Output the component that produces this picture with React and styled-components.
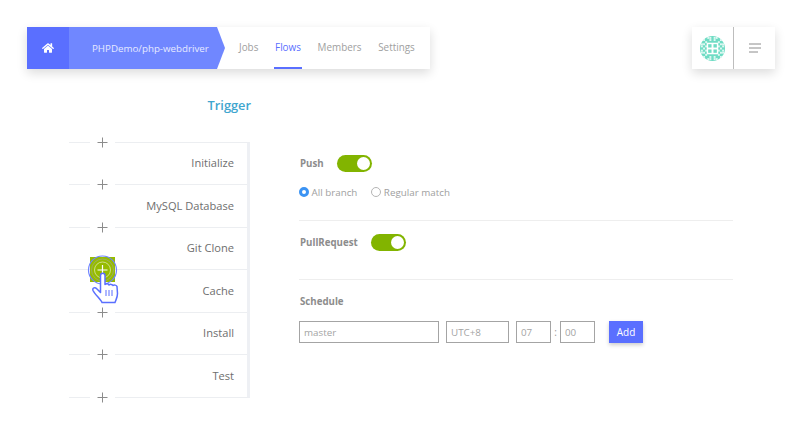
import React from "react";
import styled, { createGlobalStyle } from "styled-components";
import { FaHome } from "react-icons/fa";

const GlobalStyle = createGlobalStyle`
  html, body {
    margin: 0;
    padding: 0;
    background: #fff;
    font-family: "Open Sans", "Noto Sans", sans-serif;
  }
`;

const Page = styled.div`
  width: 800px;
  height: 448px;
  overflow: hidden;
  padding: 27px 25px 0 27px;
  box-sizing: border-box;
`;

const TopBar = styled.header`
  display: flex;
  justify-content: space-between;
  height: 42px;
`;

const NavCard = styled.nav`
  display: flex;
  width: 403px;
  background: #fff;
  box-shadow: 0 4px 10px rgba(0, 0, 0, 0.14);
`;

const HomeButton = styled.div`
  width: 42px;
  flex-shrink: 0;
  display: flex;
  align-items: center;
  justify-content: center;
  background: #5a6fff;
  color: #fff;
  font-size: 12px;
`;

const Repo = styled.div`
  width: 156px;
  flex-shrink: 0;
  box-sizing: border-box;
  padding-left: 23px;
  display: flex;
  align-items: center;
  background: #7087ff;
  color: #e6eaff;
  font-size: 9.75px;
  clip-path: polygon(0 0, 148px 0, 156px 50%, 148px 100%, 0 100%);
`;

const Tabs = styled.div`
  display: flex;
  margin-left: 13px;
  gap: 14.7px;
`;

const Tab = styled.div`
  height: 100%;
  box-sizing: border-box;
  padding: 0 1px;
  display: flex;
  align-items: center;
  font-size: 9.9px;
  color: ${(p) => (p.$active ? "#5a6fff" : "#a0a0a0")};
  border-bottom: 2px solid ${(p) => (p.$active ? "#5a6fff" : "transparent")};
`;

const UserCard = styled.div`
  display: flex;
  width: 83px;
  background: #fff;
  box-shadow: 0 4px 10px rgba(0, 0, 0, 0.14);
`;

const AvatarCell = styled.div`
  width: 42px;
  box-sizing: border-box;
  display: flex;
  align-items: center;
  justify-content: center;
  border-right: 1px solid #bdbdbd;
`;

const MenuCell = styled.div`
  flex: 1;
  display: flex;
  align-items: center;
  justify-content: center;
`;

const Content = styled.main`
  display: flex;
  margin-left: 42px;
`;

const StepColumn = styled.section`
  width: 182px;
  display: flex;
  flex-direction: column;
`;

const TriggerTitle = styled.div`
  height: 72.5px;
  padding-top: 27px;
  box-sizing: border-box;
  text-align: right;
  color: #3fa6cf;
  font-size: 12.8px;
  font-weight: 600;
  line-height: 18px;
`;

const StepList = styled.div`
  width: 181px;
  box-sizing: border-box;
  border-right: 3px solid #eef0f4;
  border-top: 1px solid #eceef1;
  border-bottom: 1px solid #eceef1;
  position: relative;
`;

const Step = styled.div`
  height: ${(p) => (p.$last ? "42px" : "42.5px")};
  box-sizing: border-box;
  display: flex;
  align-items: center;
  justify-content: flex-end;
  padding: 0 13px 1px 0;
  color: #6e6e6e;
  font-size: 11.1px;
  border-bottom: ${(p) => (p.$last ? "none" : "1px solid #eceef1")};
`;

const AddSlot = styled.div`
  position: absolute;
  left: 21px;
  top: ${(p) => p.$top}px;
  width: 25px;
  height: 13px;
  background: #fff;
  display: flex;
  align-items: center;
  justify-content: center;
`;

const ActiveSquare = styled.div`
  position: absolute;
  left: 21px;
  top: 114.5px;
  width: 25px;
  height: 25px;
  background: #96bb00;
`;

const HandOverlay = styled.div`
  position: absolute;
  left: 17px;
  top: 111.5px;
  line-height: 0;
`;

const SettingsPanel = styled.section`
  width: 434px;
  margin-left: 48px;
  padding-top: 85.5px;
`;

const Row = styled.div`
  display: flex;
  align-items: center;
  gap: 13px;
  height: 18px;
`;

const Label = styled.div`
  font-size: 9.7px;
  font-weight: 700;
  color: #8c8c8c;
  padding-left: 1px;
`;

const Toggle = styled.div`
  width: 35px;
  height: 17px;
  border-radius: 9px;
  background: #82b400;
  position: relative;
  &::after {
    content: "";
    position: absolute;
    right: 2px;
    top: 2px;
    width: 13px;
    height: 13px;
    border-radius: 50%;
    background: #fff;
  }
`;

const RadioRow = styled.div`
  display: flex;
  align-items: center;
  gap: 14px;
  margin-top: 12.5px;
  height: 14px;
`;

const RadioItem = styled.div`
  display: flex;
  align-items: center;
  gap: 2.5px;
  font-size: 9.8px;
  color: #a0a0a0;
`;

const RadioDot = styled.span`
  width: 10px;
  height: 10px;
  border-radius: 50%;
  box-sizing: border-box;
  border: ${(p) => (p.$on ? "3.5px solid #3b93f3" : "1px solid #b5b5b5")};
  background: #fff;
`;

const Divider = styled.div`
  height: 1px;
  background: #eeeeee;
  margin: ${(p) => p.$margin};
`;

const FieldRow = styled.div`
  display: flex;
  align-items: center;
  margin-top: 11px;
`;

const Field = styled.div`
  width: ${(p) => p.$w}px;
  height: 22px;
  box-sizing: border-box;
  border: 1px solid #a4a4a4;
  margin-right: ${(p) => p.$mr || 0}px;
  padding-left: 4px;
  display: flex;
  align-items: center;
  font-size: 9.8px;
  color: #a4a4a4;
`;

const Colon = styled.span`
  width: 9px;
  text-align: center;
  font-size: 10px;
  color: #999;
`;

const AddButton = styled.button`
  width: 34px;
  height: 22px;
  padding: 0;
  border: none;
  background: #5a6fff;
  color: #fff;
  font-family: inherit;
  font-size: 10px;
  box-shadow: 0 2px 4px rgba(0, 0, 0, 0.2);
`;

const steps = ["Initialize", "MySQL Database", "Git Clone", "Cache", "Install", "Test"];

const Plus = () => (
  <svg width="11" height="11" viewBox="0 0 11 11">
    <path d="M5.5 0.5v10M0.5 5.5h10" stroke="#8c8c8c" strokeWidth="1" />
  </svg>
);

const avatarCells = [
  [3, 0], [4, 0], [6, 0], [7, 0], [1, 1], [2, 2], [4, 1], [6, 1], [8, 2], [9, 1],
  [0, 3], [1, 3], [9, 3], [10, 3], [0, 4], [2, 4], [8, 4], [10, 4], [1, 5], [9, 5],
  [0, 6], [2, 6], [8, 6], [10, 6], [0, 7], [1, 7], [9, 7], [10, 7], [1, 9], [2, 8], [4, 9],
  [6, 9], [8, 8], [9, 9], [3, 10], [4, 10], [6, 10], [7, 10],
];

const Avatar = () => (
  <svg width="25" height="25" viewBox="0 0 26 26">
    <defs>
      <clipPath id="avatar-clip">
        <circle cx="13" cy="13" r="13" />
      </clipPath>
    </defs>
    <g clipPath="url(#avatar-clip)">
      <rect width="26" height="26" fill="#6fdcc4" />
      {avatarCells.map(([x, y]) => (
        <rect key={`${x}-${y}`} x={x * 2.2 + 1} y={y * 2.2 + 1} width="2" height="2" fill="#dff8f2" />
      ))}
      <rect x="7" y="7" width="12" height="12" fill="#fff" />
      {[8.5, 14].map((x) =>
        [8.5, 14].map((y) => (
          <rect key={`${x}-${y}`} x={x} y={y} width="3.5" height="3.5" fill="#6fdcc4" />
        ))
      )}
    </g>
  </svg>
);

const Hand = () => (
  <svg width="36" height="54" viewBox="0 0 36 54" fill="none">
    <circle cx="16.500" cy="16" r="14" stroke="#6f84ff" strokeWidth="1.200" />
    <circle cx="16.500" cy="16" r="11" stroke="#9aa87c" strokeWidth="0.8" />
    <circle cx="16.500" cy="16" r="8" stroke="#dbe9a8" strokeWidth="0.8" />
    <path d="M16.500 11v10M11.500 16h10" stroke="#fff" strokeWidth="1.200" />
    <path
      d="M14.500 21.500c0-3 4.500-3 4.500 0v9c1-1 3.500-1 4 .5 1-1 3.500-.8 4 .5 1-.8 3.500-.5 4 1l.5 7c0 4-1.500 6-2.500 9h-13c-1-3-7-8-9-12-1-3 2-3.500 4-1.500l3.500 3.500z"
      fill="#fff"
      stroke="#5a6fff"
      strokeWidth="1.500"
      strokeLinejoin="round"
    />
    <path d="M20 36v6M23 36v6M26 36v6" stroke="#5a6fff" strokeWidth="1" />
  </svg>
);

export default function App() {
  return (
    <Page>
      <GlobalStyle />
      <TopBar>
        <NavCard>
          <HomeButton><FaHome /></HomeButton>
          <Repo>PHPDemo/php-webdriver</Repo>
          <Tabs>
            <Tab>Jobs</Tab>
            <Tab $active>Flows</Tab>
            <Tab>Members</Tab>
            <Tab>Settings</Tab>
          </Tabs>
        </NavCard>
        <UserCard>
          <AvatarCell><Avatar /></AvatarCell>
          <MenuCell>
            <svg width="12" height="10" viewBox="0 0 12 10">
              <path d="M0 1h12M0 5h12M0 9h9" stroke="#8c8c8c" strokeWidth="1" />
            </svg>
          </MenuCell>
        </UserCard>
      </TopBar>
      <Content>
        <StepColumn>
          <TriggerTitle>Trigger</TriggerTitle>
          <StepList>
            {steps.map((s, i) => (
              <Step key={s} $last={i === steps.length - 1}>{s}</Step>
            ))}
            {[0, 1, 2, 4, 5, 6].map((i) => (
              <AddSlot key={i} $top={i * 42.5 - 7}><Plus /></AddSlot>
            ))}
            <ActiveSquare />
            <HandOverlay><Hand /></HandOverlay>
          </StepList>
        </StepColumn>
        <SettingsPanel>
          <Row>
            <Label>Push</Label>
            <Toggle />
          </Row>
          <RadioRow>
            <RadioItem><RadioDot $on />All branch</RadioItem>
            <RadioItem><RadioDot />Regular match</RadioItem>
          </RadioRow>
          <Divider $margin="21px 0 12.5px" />
          <Row>
            <Label>PullRequest</Label>
            <Toggle />
          </Row>
          <Divider $margin="27.5px 0 12px" />
          <Row>
            <Label>Schedule</Label>
          </Row>
          <FieldRow>
            <Field $w={140} $mr={7}>master</Field>
            <Field $w={63} $mr={7}>UTC+8</Field>
            <Field $w={35}>07</Field>
            <Colon>:</Colon>
            <Field $w={35} $mr={14}>00</Field>
            <AddButton>Add</AddButton>
          </FieldRow>
        </SettingsPanel>
      </Content>
    </Page>
  );
}
